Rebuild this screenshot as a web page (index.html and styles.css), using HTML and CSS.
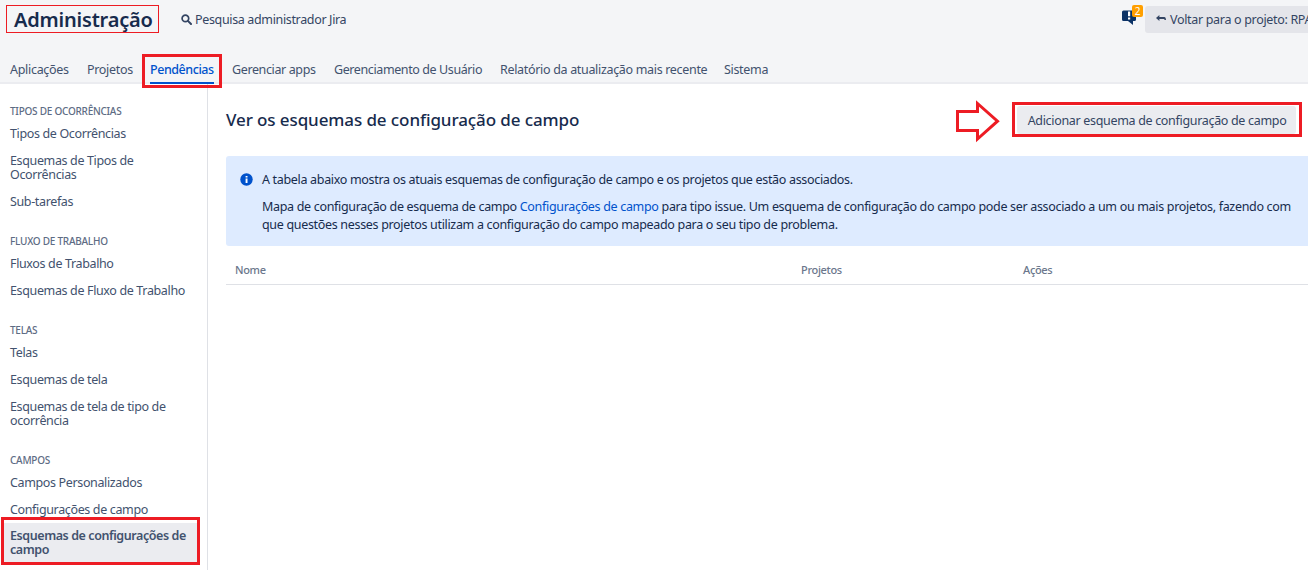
FILE: index.html
```html
<!DOCTYPE html>
<html lang="pt-BR">
<head>
<meta charset="utf-8">
<title>Administração</title>
<link rel="stylesheet" href="styles.css">
</head>
<body>
<header class="header">
  <div class="topbar">
    <h1 class="title"><span>Administração</span></h1>
    <a class="search"><svg class="search-icon" viewBox="0 0 11 11" width="11" height="11"><circle cx="4.4" cy="4.4" r="3.3" fill="none" stroke="currentColor" stroke-width="1.7"/><path d="M6.9 6.9 10 10" stroke="currentColor" stroke-width="2" stroke-linecap="round"/></svg><span>Pesquisa administrador Jira</span></a>
    <div class="feedback">
      <svg viewBox="0 0 15 16" width="15" height="16"><path d="M1.500 1.500h11A1.500 1.500 0 0 1 14 3v7.500a1.500 1.500 0 0 1-1.500 1.500H11v4L6 12H1.500A1.500 1.500 0 0 1 0 10.500V3A1.500 1.500 0 0 1 1.500 1.500z" fill="#0b3266"/><path d="M6 2.500h2.200v4.800H6zM6 8.500h2.200v2H6z" fill="#fff"/></svg>
      <span class="badge">2</span>
    </div>
    <a class="back"><svg viewBox="0 0 10 7" width="10" height="7"><path d="M3.400 0v2H8.500Q10 2.200 10 5H8.600Q8.600 4 7.700 4H3.400v2L0 3z" fill="currentColor"/></svg><span>Voltar para o projeto: RPA</span></a>
  </div>
  <nav class="nav">
    <a class="n1">Aplicações</a><a class="n2">Projetos</a><a class="n3 active">Pendências</a><a class="n4">Gerenciar apps</a><a class="n5">Gerenciamento de Usuário</a><a class="n6">Relatório da atualização mais recente</a><a class="n7">Sistema</a>
  </nav>
</header>
<div class="body">
  <aside class="sidebar">
    <section><h2>Tipos de Ocorrências</h2><a>Tipos de Ocorrências</a><a>Esquemas de Tipos de<br>Ocorrências</a><a>Sub-tarefas</a></section>
    <section><h2>Fluxo de Trabalho</h2><a>Fluxos de Trabalho</a><a>Esquemas de Fluxo de Trabalho</a></section>
    <section><h2>Telas</h2><a>Telas</a><a>Esquemas de tela</a><a>Esquemas de tela de tipo de<br>ocorrência</a></section>
    <section><h2>Campos</h2><a>Campos Personalizados</a><a>Configurações de campo</a><a class="selected">Esquemas de configurações de<br>campo</a></section>
  </aside>
  <main class="main">
    <div class="heading">
      <h2 class="page-title">Ver os esquemas de configuração de campo</h2>
      <button class="add" type="button">Adicionar esquema de configuração de campo</button>
    </div>
    <div class="info">
      <svg class="info-icon" viewBox="0 0 13 13" width="13" height="13"><circle cx="6.500" cy="6.500" r="6.200" fill="#0052cc"/><path d="M5.600 3h1.900v1.600H5.600zM5.600 5.600h1.900V10H5.600z" fill="#fff"/></svg>
      <div class="info-text">
        <p class="p1">A tabela abaixo mostra os atuais esquemas de configuração de campo e os projetos que estão associados.</p>
        <p>Mapa de configuração de esquema de campo <a>Configurações de campo</a> para tipo issue. Um esquema de configuração do campo pode ser associado a um ou mais projetos, fazendo com<br>que questões nesses projetos utilizam a configuração do campo mapeado para o seu tipo de problema.</p>
      </div>
    </div>
    <div class="table-head"><span>Nome</span><span>Projetos</span><span>Ações</span></div>
  </main>
</div>
<div class="mark mark-title"></div>
<div class="mark mark-tab"></div>
<div class="mark mark-add"></div>
<div class="mark mark-side"></div>
<svg class="arrow" viewBox="0 0 44 43" width="44" height="43"><path d="M1.500 11.500h20V3.500L41.500 21.200 21.500 39v-8.500h-20z" fill="none" stroke="#ed1c24" stroke-width="3"/></svg>
</body>
</html>
```
FILE: styles.css
```css
* { box-sizing: border-box; }
body { margin: 0; width: 1308px; height: 570px; overflow: hidden; position: relative; background: #fff; color: #172b4d; font: 12.5px/18px "Noto Sans", "Open Sans", sans-serif; letter-spacing: -0.32px; white-space: nowrap; }
h1, h2, p { margin: 0; font-weight: inherit; }
.header { height: 84px; background: #f4f5f7; border-bottom: 2px solid #ebecf0; }
.topbar { display: flex; height: 54px; align-items: flex-start; }
.topbar > * { flex: none; }
.title { width: 181px; padding: 6px 0 0 14px; font-size: 20px; line-height: 28px; font-weight: 600; letter-spacing: -0.2px; }
.search { display: flex; align-items: flex-start; gap: 3px; padding-top: 11px; width: 940px; color: #344563; letter-spacing: -0.35px; }
.search-icon { margin-top: 3px; }
.feedback { position: relative; width: 24px; height: 30px; padding: 9px 0 0 1px; }
.feedback svg { display: block; }
.badge { position: absolute; left: 11px; top: 5px; width: 11px; height: 12px; background: #ff9f00; border-radius: 2px; color: #fff; font-size: 10px; line-height: 12px; text-align: center; letter-spacing: 0; }
.back { display: flex; align-items: flex-start; gap: 4px; width: 180px; height: 27px; margin-top: 6px; padding: 5px 0 0 11px; background: #e4e5ea; border-radius: 3px; color: #344563; }
.back svg { margin-top: 4px; flex: none; }
.nav { display: flex; height: 30px; padding-left: 10px; color: #42526e; }
.nav a { height: 30px; padding-top: 7px; flex: none; }
.n1 { width: 77px; letter-spacing: -0.3px; } .n2 { width: 63px; } .n3 { width: 64px; margin-right: 18px; letter-spacing: -0.45px; } .n4 { width: 102px; letter-spacing: -0.38px; } .n5 { width: 166px; letter-spacing: -0.4px; } .n6 { width: 224px; }
.nav .active { color: #0052cc; font-weight: 500; border-bottom: 2px solid #0052cc; }
.body { display: flex; height: 486px; }
.sidebar { width: 208px; flex: none; padding: 19px 10px 0 4px; border-right: 1px solid #dfe1e6; color: #42526e; line-height: 14px; }
.sidebar section { margin-bottom: 18.500px; }
.sidebar h2 { padding-left: 6px; height: 16.500px; font-size: 10px; line-height: 16px; font-weight: 500; letter-spacing: -0.25px; text-transform: uppercase; color: #5e6c84; }
.sidebar a { display: block; padding: 7.500px 6px 5.500px; letter-spacing: -0.36px; }
.sidebar .selected { padding-top: 6.500px; padding-bottom: 6.500px; background: #ebecf0; font-weight: 600; letter-spacing: -0.42px; }
.main { flex: none; width: 1100px; padding-left: 18px; }
.heading { display: flex; justify-content: space-between; align-items: flex-start; height: 72px; padding: 22px 12px 0 0; }
.page-title { font-size: 17px; line-height: 28px; font-weight: 500; letter-spacing: -0.1px; }
.add { width: 279px; height: 28px; border: 0; border-radius: 3px; margin: 0; padding: 2px 0 0 1px; background: #ebecf0; color: #344563; font: inherit; letter-spacing: inherit; text-align: center; }
.info { display: flex; height: 90px; padding: 15px 0 0 14px; background: #deebff; border-radius: 3px 0 0 3px; }
.info-icon { margin: 2px 9px 0 0; flex: none; }
.p1 { margin-bottom: 9px; }
.info a { color: #0052cc; }
.table-head { display: grid; grid-template-columns: 566px 222px 1fr; height: 39px; padding: 15px 0 0 9px; border-bottom: 1px solid #dfe1e6; font-size: 11px; font-weight: 500; color: #6b778c; }
.mark { position: absolute; border: 3px solid #ed1c24; }
.mark-title { left: 6px; top: 5px; width: 153px; height: 28px; border-width: 1px; }
.mark-tab { left: 142px; top: 54px; width: 80px; height: 34px; }
.mark-add { left: 1012px; top: 102px; width: 290px; height: 35px; }
.mark-side { left: 1px; top: 517px; width: 199px; height: 48px; }
.arrow { position: absolute; left: 956px; top: 100px; }
```
